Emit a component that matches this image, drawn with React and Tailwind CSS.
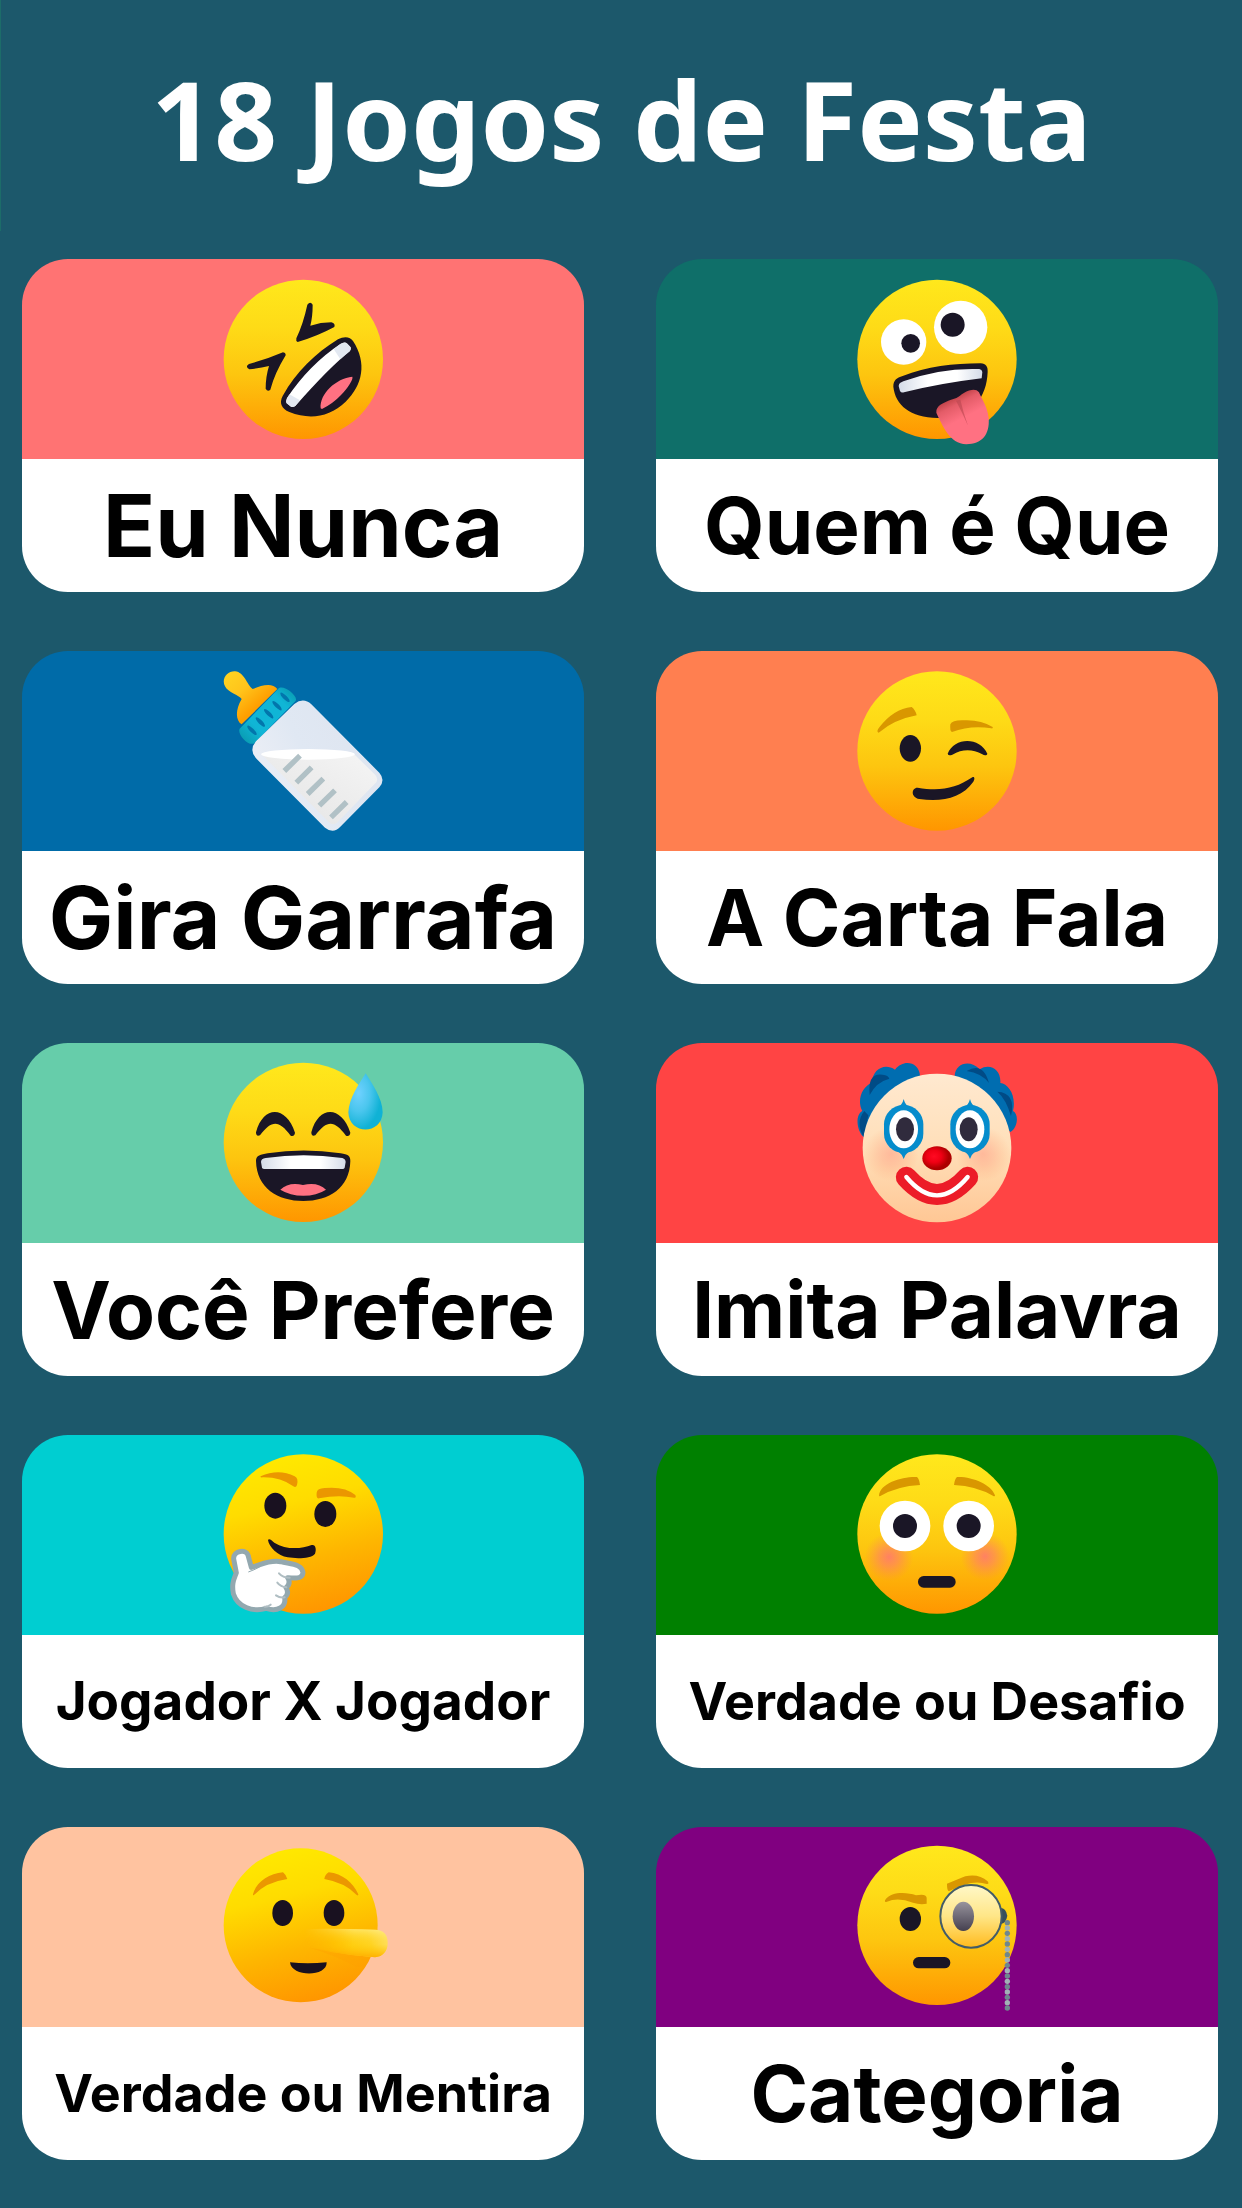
const DARK = '#1a1626'

function Gradients() {
  return (
    <svg className="absolute h-0 w-0" aria-hidden="true">
      <defs>
        <linearGradient id="face" x1="0" y1="0" x2="0" y2="1">
          <stop offset="0" stopColor="#ffe81c" />
          <stop offset="0.3" stopColor="#fedb17" />
          <stop offset="0.6" stopColor="#fdc50f" />
          <stop offset="1" stopColor="#ff9600" />
        </linearGradient>
        <linearGradient id="faceWarm" x1="0.35" y1="0" x2="0.6" y2="1">
          <stop offset="0" stopColor="#ffe900" />
          <stop offset="0.3" stopColor="#ffdc00" />
          <stop offset="0.65" stopColor="#feb600" />
          <stop offset="1" stopColor="#ff9500" />
        </linearGradient>
        <linearGradient id="teeth">
          <stop offset="0" stopColor="#d4dbe8" />
          <stop offset="0.35" stopColor="#ffffff" />
          <stop offset="0.7" stopColor="#ffffff" />
          <stop offset="1" stopColor="#d4dbe8" />
        </linearGradient>
        <linearGradient id="tongue" x1="0.3" y1="0" x2="0.55" y2="0.5">
          <stop offset="0" stopColor="#a02c2c" />
          <stop offset="0.5" stopColor="#e45c68" />
          <stop offset="1" stopColor="#ff7182" />
        </linearGradient>
        <linearGradient id="nipple" x1="0.1" y1="0" x2="0.8" y2="0.8">
          <stop offset="0" stopColor="#ffd321" />
          <stop offset="0.4" stopColor="#ffc41b" />
          <stop offset="0.8" stopColor="#ff9e00" />
        </linearGradient>
        <linearGradient id="ring" x1="0" y1="1" x2="1" y2="0">
          <stop offset="0" stopColor="#0795a8" />
          <stop offset="0.3" stopColor="#10b5d6" />
          <stop offset="0.75" stopColor="#10b5d6" />
          <stop offset="1" stopColor="#0795a8" />
        </linearGradient>
        <linearGradient id="glass" x1="0.1" y1="0.5" x2="0.65" y2="0.2">
          <stop offset="0" stopColor="#e9edf5" />
          <stop offset="0.5" stopColor="#e0e8f3" />
          <stop offset="1" stopColor="#dfe6f1" />
        </linearGradient>
        <linearGradient id="milk" x1="0" y1="1" x2="1" y2="0">
          <stop offset="0" stopColor="#e3e3e3" />
          <stop offset="1" stopColor="#f5f5f5" />
        </linearGradient>
        <radialGradient id="drop" cx="0.3" cy="0.35" r="0.65">
          <stop offset="0" stopColor="#70d1ff" />
          <stop offset="0.5" stopColor="#4bc6ee" />
          <stop offset="1" stopColor="#10b2d5" />
        </radialGradient>
        <linearGradient id="skin" x1="0" y1="0" x2="0" y2="1">
          <stop offset="0" stopColor="#ffe9d0" />
          <stop offset="0.5" stopColor="#ffdfb9" />
          <stop offset="1" stopColor="#ffc795" />
        </linearGradient>
        <radialGradient id="blush">
          <stop offset="0" stopColor="#ff7a6c" stopOpacity="0.9" />
          <stop offset="0.4" stopColor="#ff7f66" stopOpacity="0.6" />
          <stop offset="1" stopColor="#ff8a50" stopOpacity="0" />
        </radialGradient>
        <radialGradient id="clownNose" cx="0.4" cy="0.42">
          <stop offset="0" stopColor="#ff0a22" />
          <stop offset="0.5" stopColor="#f00014" />
          <stop offset="1" stopColor="#ad0000" />
        </radialGradient>
        <linearGradient id="longNose" x1="0" y1="0.5" x2="1" y2="0.4">
          <stop offset="0" stopColor="#ffca00" stopOpacity="0" />
          <stop offset="0.4" stopColor="#ffc905" />
          <stop offset="0.8" stopColor="#ffd42a" />
          <stop offset="1" stopColor="#ffe170" />
        </linearGradient>
        <linearGradient id="noseShade" x1="0.55" y1="0" x2="0.45" y2="1">
          <stop offset="0" stopColor="#fff08a" stopOpacity="0.6" />
          <stop offset="0.5" stopColor="#ffd000" stopOpacity="0.2" />
          <stop offset="1" stopColor="#ffaa00" />
        </linearGradient>
        <linearGradient id="noseFade" x1="0" y1="0" x2="1" y2="0">
          <stop offset="0.1" stopColor="#fff" stopOpacity="0" />
          <stop offset="0.6" stopColor="#fff" />
        </linearGradient>
        <mask id="noseMask" maskUnits="userSpaceOnUse" x="285" y="295" width="290" height="110">
          <rect x="285" y="295" width="290" height="110" fill="url(#noseFade)" />
        </mask>
        <linearGradient id="lens" x1="0" y1="0" x2="0" y2="1">
          <stop offset="0" stopColor="#fff8c8" />
          <stop offset="0.5" stopColor="#ffe687" />
          <stop offset="1" stopColor="#ffba1c" />
        </linearGradient>
        <linearGradient id="lensEye" x1="0" y1="0" x2="0" y2="1">
          <stop offset="0" stopColor="#98949d" />
          <stop offset="1" stopColor="#454050" />
        </linearGradient>
      </defs>
    </svg>
  )
}

function Rofl() {
  return (
    <>
      <circle cx="310" cy="298" r="239" fill="url(#face)" />
      <g fill={DARK}>
        <path d="M322 134 Q331 122 338 134 Q338 170 331 197 Q362 187 394 187 Q407 190 403 201 Q351 229 293 246 Q287 243 289 235 Q310 190 322 134 Z" />
        <path d="M147 312 Q200 298 249 277 Q258 278 257 286 Q224 340 211 389 Q203 397 197 386 Q197 350 207 318 Q180 325 148 328 Q134 320 147 312 Z" />
        <path d="M414 238 C432 228 451 230 459 243 C502 309 488 375 437 425 C388 472 329 480 268 456 C244 446 237 429 248 408 C289 335 346 280 414 238 Z" />
      </g>
      <path d="M421 252 Q434 243 442 251 L452 262 Q454 267 450 273 Q389 321 286 438 Q279 443 273 440 L260 430 Q256 425 261 414 Q328 314 421 252 Z" fill="#fff" />
      <path d="M421 252 Q434 243 442 251 L452 262 Q454 267 450 273 L421 298 L401 267 Z M268 403 L300 421 L286 438 Q279 443 273 440 L260 430 Q256 425 268 403 Z" fill="#dce2ed" opacity="0.8" />
      <path d="M362 445 C358 401 408 355 457 350 C461 357 443 385 423 405 Q400 430 366 447 Z" fill="#ff7182" />
    </>
  )
}

function Zany() {
  return (
    <>
      <circle cx="321" cy="298" r="239" fill="url(#face)" />
      <circle cx="221" cy="246" r="68" fill="#fff" />
      <circle cx="392" cy="202" r="80" fill="#fff" />
      <circle cx="242" cy="250" r="28" fill={DARK} />
      <circle cx="368" cy="194" r="36" fill={DARK} />
      <path d="M190 380 C190 360 200 354 218 348 C290 320 370 310 452 310 C468 311 474 320 473 336 C470 410 430 474 323 474 C240 472 196 435 190 380 Z" fill={DARK} />
      <path d="M206 378 C207 370 211 368 220 364 Q330 323 448 327 Q456 328 457 336 L455 355 Q330 370 222 397 Q213 399 210 393 Z" fill="url(#teeth)" />
      <path d="M319 458 C317 435 342 428 363 419 Q378 417 390 407 C407 393 435 381 447 397 C456 420 472 437 476 475 C480 525 455 552 409 553 C358 551 337 495 319 458 Z" fill="url(#tongue)" />
      <path d="M378 422 Q397 458 414 497 Q399 455 391 419 Z" fill="#b94650" opacity="0.6" />
    </>
  )
}

function Bottle() {
  return (
    <>
      <path d="M75 109 C63 86 82 63 105 64 C134 67 140 104 158 117 C181 107 217 96 232 117 L125 223 C107 213 105 181 125 147 C117 135 84 128 75 109 Z" fill="url(#nipple)" />
      <path d="M119 236 L235 116 C249 101 299 140 286 154 L164 279 C148 292 110 253 119 236 Z" fill="url(#ring)" />
      <g fill="#0276ac">
        {[[156, 241], [181, 216], [206, 191], [231, 167], [255, 142]].map(([x, y]) => (
          <ellipse key={x} cx={x} cy={y} rx="6" ry="19" transform={`rotate(-45 ${x} ${y})`} />
        ))}
      </g>
      <path d="M283 162 Q310 141 334 163 L538 368 Q557 390 538 412 L421 530 Q400 553 375 533 L168 325 Q146 300 168 274 Z" fill="url(#glass)" />
      <path d="M187 315 L465 315 L526 375 Q537 389 526 400 L413 516 Q399 530 386 516 Z" fill="url(#milk)" />
      <ellipse cx="324" cy="313" rx="141" ry="16" fill="#fff" />
      <path d="M253 363 L300 317 M289 398 L335 352 M323 432 L370 386 M358 467 L405 421 M393 502 L440 456" stroke="#b1c1c6" strokeWidth="16" />
    </>
  )
}

function Wink() {
  return (
    <>
      <circle cx="321" cy="303" r="239" fill="url(#face)" />
      <path d="M146 248 C139 246 144 237 148 232 Q190 177 245 171 Q256 179 260 196 Q194 208 146 248 Z" fill="#d99700" />
      <path d="M361 223 Q366 211 396 211 Q450 207 488 231 Q490 236 484 235 Q421 225 366 246 Q359 245 361 223 Z" fill="#d99700" />
      <ellipse cx="241" cy="295" rx="32" ry="40" fill={DARK} />
      <path d="M353 311 C373 260 450 260 472 311 C471 317 463 317 457 313 Q412 288 367 314 Q355 319 353 311 Z" fill={DARK} />
      <path d="M263 413 C328 425 377 416 427 382 C434 378 435 388 430 395 C395 445 336 456 268 447 C240 441 245 412 263 413 Z" fill={DARK} />
    </>
  )
}

function Sweat() {
  return (
    <>
      <circle cx="310" cy="301" r="239" fill="url(#face)" />
      <path d="M168 271 C190 190 258 190 285 272 Q283 285 272 281 C236 234 216 234 180 280 Q168 285 168 271 Z" fill={DARK} />
      <path d="M334 271 C356 190 424 190 451 272 Q449 285 438 281 C402 234 382 234 346 280 Q334 285 334 271 Z" fill={DARK} />
      <path d="M168 357 C168 340 182 338 203 334 Q310 317 422 334 C444 338 451 341 451 357 C449 438 387 477 310 477 C233 477 170 438 168 357 Z" fill={DARK} />
      <path d="M183 360 Q183 350 197 348 Q310 331 427 348 Q437 351 437 360 L434 377 Q433 381 427 381 L194 381 Q187 381 186 377 Z" fill="url(#teeth)" />
      <path d="M241 443 Q266 419 309 429 Q354 419 378 443 Q350 461 310 461 Q270 461 241 443 Z" fill="#ff7182" />
      <path d="M497 94 C516 125 548 170 548 211 C546 280 447 280 445 211 C447 168 478 125 497 94 Z" fill="url(#drop)" />
    </>
  )
}

function ClownEye({ x }) {
  return (
    <>
      <path d={`M${x} 171 Q${x + 4} 188 ${x + 18} 197 L${x + 18} 326 Q${x + 5} 336 ${x} 351 Q${x - 5} 336 ${x - 18} 326 L${x - 18} 197 Q${x - 4} 188 ${x} 171 Z`} fill="#058ccc" />
      <rect x={x - 59} y="189" width="118" height="144" rx="58" fill="#058ccc" />
      <ellipse cx={x} cy="262" rx="43" ry="57" fill="#fff" />
    </>
  )
}

function Clown() {
  return (
    <>
      <path d="M101 285 C82 270 73 221 97 207 C79 174 98 132 125 123 C128 82 163 62 195 83 C220 50 267 59 270 101 Z M541 270 C564 258 567 215 549 207 C560 161 535 125 511 123 C514 83 480 62 449 82 C421 51 376 63 374 101 Z" fill="#006db0" />
      <path d="M119 159 Q112 91 158 98 Q175 100 178 110 Q139 120 119 159 Z M410 87 Q459 58 477 123 Q454 93 410 87 Z M502 149 Q559 152 543 222 Q528 171 502 149 Z M101 285 Q75 242 103 207 L115 220 Z" fill="#004b86" />
      <circle cx="321" cy="318" r="223" fill="url(#skin)" />
      <circle cx="184" cy="336" r="82" fill="url(#blush)" opacity="0.4" />
      <circle cx="459" cy="336" r="82" fill="url(#blush)" opacity="0.4" />
      <ClownEye x={221} />
      <ClownEye x={420} />
      <ellipse cx="225" cy="262" rx="27" ry="36" fill="#302b3d" />
      <ellipse cx="416" cy="262" rx="27" ry="36" fill="#302b3d" />
      <ellipse cx="321" cy="349" rx="44" ry="36" fill="url(#clownNose)" />
      <path d="M229 406 Q321 509 413 406" fill="none" stroke="#ec1c28" strokeWidth="63" strokeLinecap="round" />
      <path d="M229 405 Q321 515 413 405" fill="none" stroke="#fff" strokeWidth="13" strokeLinecap="round" />
    </>
  )
}

function Thinking() {
  return (
    <>
      <circle cx="310" cy="300" r="239" fill="url(#faceWarm)" />
      <path d="M182 127 Q236 102 284 127 Q296 132 291 153 Q288 162 280 157 Q242 129 188 130 Q179 131 182 127 Z" fill="#eb9700" />
      <path d="M350 176 Q351 163 374 162 Q434 156 466 183 Q470 193 462 191 Q415 181 357 193 Q348 195 350 176 Z" fill="#eb9700" />
      <ellipse cx="226" cy="215" rx="33" ry="39" fill="#191120" />
      <ellipse cx="376" cy="240" rx="33" ry="39" fill="#191120" />
      <path d="M204 318 C207 312 215 319 223 326 C258 348 304 345 335 333 C347 330 350 347 345 359 C333 375 287 374 263 370 C234 366 206 338 204 318 Z" fill="#191120" />
      <path d="M101 375 C99 349 141 343 145 367 L154 400 C182 393 207 377 242 383 C275 391 306 390 309 416 C307 436 281 433 263 431 Q274 449 258 461 Q269 478 254 491 C259 520 231 534 199 523 C157 535 113 519 100 479 C94 446 103 434 109 416 Z" fill="#fff" stroke="#93a8af" strokeWidth="15" strokeLinejoin="round" />
      <path d="M145 414 Q162 408 179 399" fill="none" stroke="#93a8af" strokeWidth="3" />
      <path d="M237 418 Q248 431 269 431 M232 446 Q242 459 259 460 M228 484 Q240 493 254 490 M194 518 Q203 519 212 512" fill="none" stroke="#b0bec3" strokeWidth="6" strokeLinecap="round" />
    </>
  )
}

function Flushed() {
  return (
    <>
      <circle cx="321" cy="300" r="239" fill="url(#face)" />
      <path d="M147 184 C151 147 216 127 261 129 Q268 135 270 153 Q203 156 151 186 Q147 188 147 184 Z M495 184 C484 151 426 127 381 129 Q374 135 372 153 Q439 156 490 186 Q495 188 495 184 Z" fill="#d99700" />
      <circle cx="177" cy="369" r="73" fill="url(#blush)" />
      <circle cx="465" cy="367" r="73" fill="url(#blush)" />
      <circle cx="225" cy="276" r="76" fill="#fff" />
      <circle cx="416" cy="276" r="76" fill="#fff" />
      <circle cx="225" cy="276" r="36" fill={DARK} />
      <circle cx="416" cy="276" r="36" fill={DARK} />
      <rect x="264" y="426" width="113" height="35" rx="17" fill={DARK} />
    </>
  )
}

function Lying() {
  return (
    <>
      <circle cx="302" cy="298" r="231" fill="url(#faceWarm)" />
      <path d="M159 205 C167 170 206 143 249 139 Q258 146 262 159 Q199 168 162 207 Q158 209 159 205 Z M475 205 C459 170 427 143 386 139 Q375 145 373 159 Q436 170 470 207 Q475 210 475 205 Z" fill="#eb9700" />
      <ellipse cx="248" cy="261" rx="31" ry="39" fill="#191120" />
      <ellipse cx="402" cy="261" rx="31" ry="39" fill="#191120" />
      <path d="M330 365 Q450 382 510 395 Q495 426 470 423 Q410 390 330 365 Z" fill="#ff9f00" opacity="0.3" />
      <g mask="url(#noseMask)">
        <path d="M292 313 Q330 304 525 311 C550 311 563 326 563 350 C563 375 550 391 525 394 Q390 384 292 355 Z" fill="url(#longNose)" />
        <path d="M292 313 Q330 304 525 311 C550 311 563 326 563 350 C563 375 550 391 525 394 Q390 384 292 355 Z" fill="url(#noseShade)" />
      </g>
      <path d="M270 409 Q322 415 380 409 C382 454 274 454 270 409 Z" fill="#191120" />
    </>
  )
}

function Monocle() {
  const links = Array.from({ length: 17 }, (_, i) => 290 + i * 16)

  return (
    <>
      <circle cx="321" cy="298" r="239" fill="url(#face)" />
      <path d="M165 223 C184 195 231 199 258 208 Q288 202 290 215 L290 233 Q270 237 249 230 Q204 213 171 227 Q163 231 165 223 Z" fill="#d99700" />
      <path d="M351 173 Q385 160 406 151 Q446 142 473 166 Q479 175 470 174 Q427 158 358 195 Q351 198 351 173 Z" fill="#d99700" />
      <ellipse cx="241" cy="279" rx="32" ry="36" fill={DARK} />
      <path d="M512 246 Q528 247 532 269 Q528 292 512 294 Z" fill="#37505b" />
      <ellipse cx="423" cy="271" rx="92" ry="94" fill="url(#lens)" stroke="#435c68" strokeWidth="6" />
      <ellipse cx="400" cy="271" rx="32" ry="44" fill="url(#lensEye)" />
      {links.map((y, i) => (
        <circle key={y} cx="532" cy={y} r="8" fill={i % 2 ? '#a1b1b6' : '#6f878e'} />
      ))}
      <rect x="249" y="393" width="112" height="34" rx="17" fill={DARK} />
    </>
  )
}

const games = [
  { name: 'Eu Nunca', emoji: Rofl, view: '-6 -3 630 600', color: 'bg-[#ff7373]', size: 'text-[86px]' },
  { name: 'Quem é Que', emoji: Zany, view: '6 -3 630 600', color: 'bg-[#0f6f69]', size: 'text-[78px]' },
  { name: 'Gira Garrafa', emoji: Bottle, view: '-6 3 630 600', color: 'bg-[#006ba8]', size: 'text-[86px]' },
  { name: 'A Carta Fala', emoji: Wink, view: '6 3 630 600', color: 'bg-[#ff7f50]', size: 'text-[78px]' },
  { name: 'Você Prefere', emoji: Sweat, view: '-6 3 630 600', color: 'bg-[#66cdaa]', size: 'text-[80px]' },
  { name: 'Imita Palavra', emoji: Clown, view: '6 3 630 600', color: 'bg-[#ff4444]', size: 'text-[78px]' },
  { name: 'Jogador X Jogador', emoji: Thinking, view: '-6 3 630 600', color: 'bg-[#00ced1]', size: 'text-[53px]' },
  { name: 'Verdade ou Desafio', emoji: Flushed, view: '6 3 630 600', color: 'bg-[#008000]', size: 'text-[52px]' },
  { name: 'Verdade ou Mentira', emoji: Lying, view: '-6 3 630 600', color: 'bg-[#ffc3a0]', size: 'text-[52px]' },
  { name: 'Categoria', emoji: Monocle, view: '6 3 630 600', color: 'bg-[#800080]', size: 'text-[78px]' },
]

function GameCard({ name, emoji: Emoji, view, color, size }) {
  return (
    <button type="button" className="flex flex-col overflow-hidden rounded-[46px]">
      <span className={`flex w-full justify-center ${color}`}>
        <svg viewBox={view} className="h-[200px] w-[210px]" aria-hidden="true">
          <Emoji />
        </svg>
      </span>
      <span className={`flex h-[133px] w-full items-center justify-center bg-white font-['Inter',sans-serif] leading-none font-bold whitespace-nowrap text-black ${size}`}>
        {name}
      </span>
    </button>
  )
}

export default function App() {
  return (
    <main className="min-h-screen bg-[#1c586b] pb-12">
      <Gradients />
      <header className="flex h-[231px] items-center justify-center border-l border-[#1c6c69] pt-1">
        <h1 className="font-['Noto_Sans',sans-serif] text-[110px] font-bold leading-none text-white">18 Jogos de Festa</h1>
      </header>
      <div className="grid grid-cols-2 gap-x-[72px] gap-y-[59px] pt-7 pr-6 pl-[22px]">
        {games.map((game) => (
          <GameCard key={game.name} {...game} />
        ))}
      </div>
    </main>
  )
}
